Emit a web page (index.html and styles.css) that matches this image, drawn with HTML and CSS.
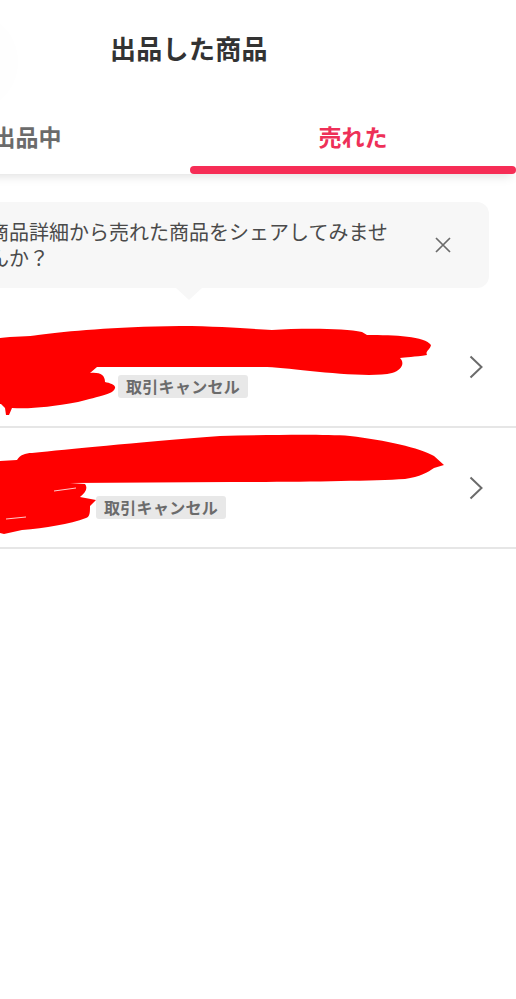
FILE: index.html
```html
<!DOCTYPE html>
<html lang="ja">
<head>
<meta charset="utf-8">
<title>出品した商品</title>
<link rel="stylesheet" href="styles.css">
</head>
<body>
<div class="page">
  <header class="topbar">
    <span class="back-circle"></span>
    <h1 class="title">出品した商品</h1>
  </header>
  <nav class="tabs">
    <div class="tab">出品中</div>
    <div class="tab tab-active">売れた</div>
  </nav>
  <section class="notice">
    <p class="notice-text">商品詳細から売れた商品をシェアしてみませんか？</p>
    <svg class="notice-close" viewBox="0 0 18 18" aria-hidden="true"><path d="M2 2 16 16M16 2 2 16"/></svg>
    <span class="notice-arrow"></span>
  </section>
  <ul class="items">
    <li class="item">
      <div class="item-body">
        <div class="item-name"></div>
        <div class="item-meta"><span class="item-date item-date-long"></span><span class="badge">取引キャンセル</span></div>
      </div>
      <svg class="chevron" viewBox="0 0 16 24" aria-hidden="true"><path d="M2.5 1.5 13.5 12 2.5 22.5"/></svg>
      <svg class="scribble" viewBox="0 307 516 121" aria-hidden="true">
        <path class="ink" d="M0 338C12 336 30 337 38 335C70 331 110 327 180 326C220 326 250 329 272 330C300 328 345 328 362 332L367 335C395 335 425 336 431 345C430 350 425 351 427 355C415 357 405 357 400 358C405 363 402 370 392 373C375 377 340 374 310 371C290 369 275 367 262 367L97 367L90 373C100 372 105 375 105 382C110 383 116 385 115 388C114 394 100 396 78 402C50 407 32 409 12 408L9 415L6 415L5 408L1 404L0 404Z"/>
      </svg>
    </li>
    <li class="item">
      <div class="item-body">
        <div class="item-name"></div>
        <div class="item-meta"><span class="item-date"></span><span class="badge">取引キャンセル</span></div>
      </div>
      <svg class="chevron" viewBox="0 0 16 24" aria-hidden="true"><path d="M2.5 1.5 13.5 12 2.5 22.5"/></svg>
      <svg class="scribble" viewBox="0 428 516 121" aria-hidden="true">
        <path class="ink" d="M0 461L17 460C20 455 25 453 32 453C70 449 130 443 220 436C270 435 320 434 350 436C385 440 420 448 434 456L444 465L434 468C428 472 420 477 405 479C370 481 300 482 230 482L70 483L85 484C88 488 86 492 80 497L96 500L90 506C90 512 90 517 86 518C70 524 45 528 22 530L4 534L0 533Z"/>
        <path class="gap" d="M54 491 76 488M6 519 26 517"/>
      </svg>
    </li>
  </ul>
</div>
</body>
</html>
```
FILE: styles.css
```css
* { box-sizing: border-box; }
html, body { margin: 0; padding: 0; background: #fff; }
body {
  width: 516px;
  height: 999px;
  overflow: hidden;
  font-family: "Noto Sans CJK JP", "Noto Sans", sans-serif;
}
.page { width: 652px; margin-left: -136px; }

.topbar {
  position: relative;
  height: 118px;
  padding: 28px 0 0 246px;
}
.back-circle {
  position: absolute;
  left: 64px;
  top: 14px;
  width: 90px;
  height: 96px;
  border-radius: 50%;
  background: #fefefe;
}
.title {
  position: relative;
  margin: 0;
  font-size: 26px;
  letter-spacing: .3px;
  line-height: 40px;
  font-weight: 700;
  color: #333;
}

.tabs {
  position: relative;
  display: flex;
  height: 56px;
  box-shadow: 0 7px 10px -5px rgba(0, 0, 0, .13);
}
.tab {
  flex: 1;
  height: 56px;
  padding-top: 1px;
  text-align: center;
  font-size: 23px;
  line-height: 34px;
  font-weight: 700;
  color: #6b6b6b;
}
.tab-active {
  position: relative;
  color: #ee3058;
}
.tab-active::after {
  content: "";
  position: absolute;
  left: 0;
  right: 0;
  bottom: 0;
  height: 8px;
  border-radius: 4px;
  background: #f62d56;
}

.notice {
  position: relative;
  display: flex;
  align-items: center;
  width: 616px;
  height: 86px;
  margin: 28px 0 0 9px;
  padding: 0 37px 0 0;
  border-radius: 12px;
  background: #f7f7f7;
}
.notice-text {
  flex: none;
  width: 400px;
  margin: 0 0 0 116px;
  font-size: 20px;
  line-height: 26px;
  color: #4a4a4a;
}
.notice-close {
  flex: none;
  width: 18px;
  height: 18px;
  margin-left: auto;
  fill: none;
  stroke: #6b6b6b;
  stroke-width: 1.7;
}
.notice-arrow {
  position: absolute;
  left: 303px;
  bottom: -12px;
  width: 0;
  height: 0;
  border-left: 13px solid transparent;
  border-right: 13px solid transparent;
  border-top: 12px solid #f7f7f7;
}

.items {
  list-style: none;
  margin: 19px 0 0;
  padding: 0;
}
.item {
  position: relative;
  display: flex;
  align-items: center;
  height: 121px;
  padding-right: 32px;
  border-bottom: 2px solid #e6e6e6;
}
.item-body { flex: 1; align-self: flex-start; padding-left: 136px; }
.item-name { height: 68px; }
.item-meta { display: flex; align-items: center; }
.item-date { width: 96px; }
.item-date-long { width: 118px; }
.badge {
  display: block;
  height: 23px;
  padding: 0 8px;
  border-radius: 3px;
  background: #e8e8e8;
  font-size: 16px;
  letter-spacing: .3px;
  line-height: 23px;
  font-weight: 700;
  color: #6b6b6b;
}
.chevron {
  flex: none;
  width: 16px;
  height: 24px;
  margin-top: 1px;
  fill: none;
  stroke: #6b6b6b;
  stroke-width: 2;
}
.scribble {
  position: absolute;
  left: 136px;
  top: 0;
  width: 516px;
  height: 121px;
}
.ink { fill: #ff0000; }
.gap { fill: none; stroke: #fff; stroke-width: .8; }
```
